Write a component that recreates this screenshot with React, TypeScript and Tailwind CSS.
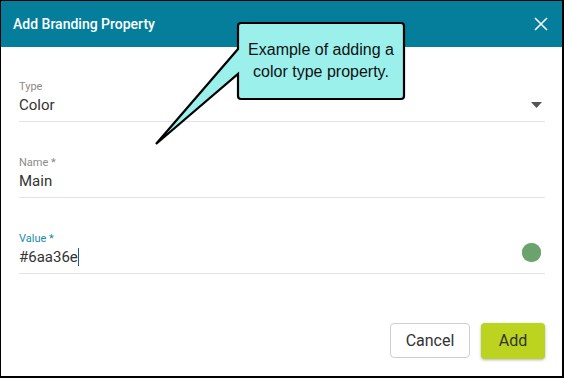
import React from "react";

function Field({ label, value, focus, children }: { label: string; value: React.ReactNode; focus?: boolean; children?: React.ReactNode }) {
  return (
    <div className="flex flex-col border-b border-[#e3e3e3] pb-[6px]">
      <div className={`text-[11px] leading-[14px] ${focus ? "text-[#1a8ca8]" : "text-[#8a8a8a]"}`}>{label}</div>
      <div className="mt-[1px] flex items-center justify-between h-[20px]">
        <div className="text-[15px] leading-[20px] text-[#333] flex items-center">{value}</div>
        {children}
      </div>
    </div>
  );
}

export default function App() {
  return (
    <div
      className="relative w-[564px] h-[378px] bg-white border-t border-l border-r-2 border-b-2 border-black overflow-hidden"
      style={{ fontFamily: "Roboto, 'Noto Sans', sans-serif" }}
    >
      <div className="h-[46px] bg-[#047e9a] flex items-center justify-between pl-[12px] pr-[14px]">
        <div className="text-white text-[14px] font-medium">Add Branding Property</div>
        <svg width="14" height="14" viewBox="0 0 14 14">
          <path d="M1 1 L13 13 M13 1 L1 13" stroke="white" strokeWidth="1.6" />
        </svg>
      </div>
      <div className="pl-[18px] pr-[17px] pt-[33px] flex flex-col gap-[34px]">
        <Field label="Type" value="Color">
          <svg width="11" height="6" viewBox="0 0 11 6" className="mr-[3px]">
            <path d="M0 0 L11 0 L5.5 6 Z" fill="#555" />
          </svg>
        </Field>
        <Field label="Name *" value="Main" />
        <Field
          label="Value *"
          focus
          value={
            <>
              #6aa36e<span className="inline-block w-[1px] h-[18px] bg-[#1a5f8a]" />
            </>
          }
        >
          <div className="w-[19px] h-[19px] rounded-full bg-[#6aa36e] mr-[4px] mt-[-9px] shadow-[0_0_1px_rgba(0,0,0,0.4)]" />
        </Field>
        <div className="flex justify-end gap-[11px] mt-[15px]">
          <button className="w-[80px] h-[35px] rounded-[4px] border border-[#cfcfcf] bg-white text-[16px] text-[#333]">
            Cancel
          </button>
          <button className="w-[64px] h-[36px] rounded-[4px] bg-[#bcd31f] text-[16px] text-[#333] shadow-[0_1px_3px_rgba(0,0,0,0.3)]">
            Add
          </button>
        </div>
      </div>

      <svg className="absolute left-0 top-0" width="564" height="378" viewBox="0 0 564 378">
        <path
          d="M240 22 L400 22 Q403 22 403 25 L403 95 Q403 98 400 98 L240 98 Q237 98 237 95 L237 73 L155 143 L237 48 L237 25 Q237 22 240 22 Z"
          fill="#9cf0ec"
          stroke="#000"
          strokeWidth="2.2"
          strokeLinejoin="miter"
        />
      </svg>
      <div
        className="absolute left-[237px] top-[38px] w-[166px] text-center text-[16px] leading-[22px] text-[#111]"
        style={{ fontFamily: "'Liberation Sans', Arial, sans-serif" }}
      >
        Example of adding a
        <br />
        color type property.
      </div>
    </div>
  );
}
